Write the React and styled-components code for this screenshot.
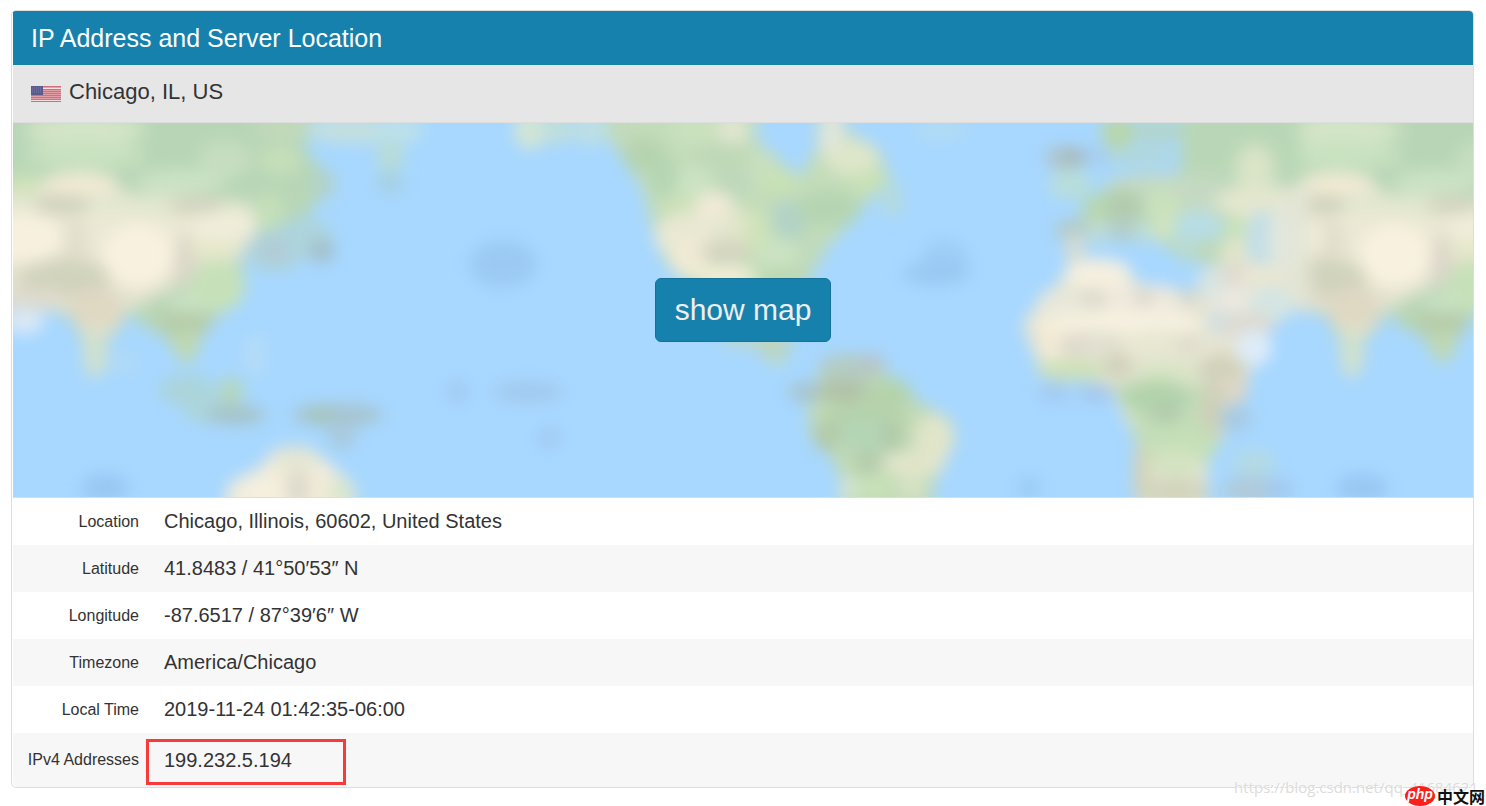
import React from "react";
import styled, { createGlobalStyle } from "styled-components";

const rows = [
  { label: "Location", value: "Chicago, Illinois, 60602, United States" },
  { label: "Latitude", value: "41.8483 / 41°50′53″ N" },
  { label: "Longitude", value: "-87.6517 / 87°39′6″ W" },
  { label: "Timezone", value: "America/Chicago" },
  { label: "Local Time", value: "2019-11-24 01:42:35-06:00" },
  { label: "IPv4 Addresses", value: "199.232.5.194", marked: true },
];

// [cx, cy, rx, ry, fill]
const asiaShades = [
  [25, 140, 22, 24, "#b8d6b8"],
  [85, 130, 60, 16, "#d3e5c6"],
  [85, 155, 60, 14, "#c9e2c0"],
  [180, 182, 45, 12, "#cbe3c4"],
  [225, 160, 26, 18, "#c6debf"],
  [25, 184, 18, 10, "#cfe3b9"],
  [285, 128, 30, 12, "#c2d9ba"],
  [280, 160, 20, 14, "#c6dfba"],
  [80, 183, 38, 11, "#f1ead4"],
  [130, 208, 125, 14, "#e3e7cf"],
  [62, 205, 28, 10, "#d1d3be"],
  [196, 205, 28, 10, "#d5d5c1"],
  [110, 235, 110, 22, "#ebe9d5"],
  [222, 226, 34, 14, "#f0eedb"],
  [270, 215, 14, 24, "#c4dfb8"],
  [24, 238, 40, 26, "#f7f0df"],
  [75, 244, 12, 26, "#e1dfcc"],
  [138, 256, 36, 32, "#f8f1df"],
  [186, 262, 11, 28, "#dbd6c9"],
  [212, 248, 24, 10, "#e6e8ca"],
  [64, 279, 46, 20, "#d1d3bd"],
  [35, 298, 34, 10, "#dfdacc"],
  [22, 304, 14, 8, "#d9dbd5"],
  [96, 308, 28, 20, "#dfd8c3"],
  [217, 286, 28, 26, "#c6e1b9"],
  [184, 304, 22, 10, "#c9e2c3"],
  [160, 308, 12, 14, "#b9d6b6"],
  [185, 323, 28, 12, "#b6ccaa"],
  [186, 346, 12, 16, "#c0d8b0"],
  [95, 354, 12, 24, "#d1e1cd"],
];

const shades = [
  // north pacific
  [352, 130, 44, 14, "#c3dfdf"],
  [400, 130, 24, 14, "#bce0ea"],
  [390, 156, 14, 16, "#b8dcd6"],
  [390, 183, 14, 10, "#a5cfdf"],
  [324, 184, 12, 16, "#b1d2cb"],
  [275, 250, 28, 22, "#aed2d8"],
  [304, 238, 28, 22, "#add4dd"],
  [275, 250, 14, 8, "#b4c8d6"],
  [322, 251, 13, 12, "#a3bfca"],
  [24, 322, 20, 12, "#dbe9f6"],
  [255, 355, 10, 22, "#b6dcf6"],
  [122, 362, 18, 12, "#b0d9f6"],
  // south east asia and australia
  [187, 390, 28, 16, "#abd4da"],
  [207, 410, 24, 14, "#acd5dc"],
  [231, 391, 13, 14, "#b4d6be"],
  [236, 415, 30, 10, "#a5c3c8"],
  [338, 415, 46, 11, "#a6c3cc"],
  [320, 415, 14, 9, "#a6c4b8"],
  [342, 434, 14, 16, "#a9c9de"],
  // ocean depth
  [105, 488, 24, 14, "#98c7f3"],
  [503, 264, 34, 24, "#9bc9f3"],
  [458, 392, 12, 11, "#a2c9f1"],
  [528, 392, 36, 11, "#a3c9ef"],
  [549, 438, 12, 11, "#a2c9f1"],
  [945, 260, 24, 20, "#9dcdf6"],
  [936, 274, 34, 11, "#99c8f2"],
  [1029, 488, 12, 12, "#9accf4"],
  [1362, 488, 26, 14, "#98c7f3"],
  // north america
  [530, 130, 16, 20, "#d2e5d4"],
  [556, 130, 16, 14, "#c0dfda"],
  [590, 130, 18, 16, "#bddfe3"],
  [622, 132, 14, 16, "#c3dabb"],
  [644, 155, 22, 18, "#b6d3af"],
  [664, 178, 14, 22, "#b4d5b3"],
  [696, 130, 26, 12, "#cbe2bf"],
  [733, 130, 16, 14, "#e1e6d0"],
  [720, 158, 30, 10, "#bed7b6"],
  [736, 182, 20, 10, "#bdd6bb"],
  [694, 182, 18, 16, "#cbe3c3"],
  [680, 203, 18, 12, "#cbe0b9"],
  [714, 207, 20, 16, "#f0ead6"],
  [688, 236, 34, 24, "#e9e8d2"],
  [740, 228, 20, 18, "#e2e6cb"],
  [690, 258, 20, 20, "#f0ead5"],
  [727, 251, 27, 11, "#d4d4c0"],
  [727, 277, 30, 12, "#f1eed6"],
  [762, 170, 14, 20, "#c9dfbf"],
  [780, 182, 18, 10, "#c9e2b4"],
  [832, 138, 12, 28, "#e2e6de"],
  [852, 158, 26, 18, "#dee6ca"],
  [870, 182, 22, 10, "#c7e1b6"],
  [828, 209, 34, 18, "#b5d5b2"],
  [786, 214, 14, 14, "#b3d3c9"],
  [790, 228, 16, 12, "#b2d2c6"],
  [756, 232, 12, 22, "#cfe3b9"],
  [780, 254, 24, 16, "#cbe3c2"],
  [810, 252, 14, 16, "#bfdabb"],
  [784, 276, 28, 10, "#bcd7b3"],
  [892, 198, 11, 20, "#b4dade"],
  [940, 130, 28, 10, "#b2dbf3"],
  // central and south america
  [775, 346, 18, 10, "#bad3c0"],
  [740, 340, 20, 8, "#b8d7d3"],
  [850, 368, 32, 14, "#b4cbc2"],
  [872, 364, 14, 10, "#b8c4c8"],
  [806, 392, 18, 11, "#a8c5d1"],
  [842, 391, 26, 11, "#b0c2a6"],
  [890, 394, 22, 16, "#b4d3ab"],
  [864, 418, 40, 16, "#b5d1ac"],
  [866, 436, 30, 18, "#b4d5b5"],
  [826, 437, 12, 14, "#b2c8a8"],
  [892, 437, 11, 14, "#b0c9a8"],
  [868, 463, 12, 12, "#b3caab"],
  [934, 438, 20, 24, "#e1e5c9"],
  [914, 464, 32, 14, "#e1e5ca"],
  [872, 488, 22, 14, "#c8e1b9"],
  [848, 490, 9, 16, "#d2e3d0"],
  [912, 488, 14, 14, "#d5e2c4"],
  // europe
  [1118, 132, 17, 18, "#b8d6ab"],
  [1158, 130, 26, 14, "#b2d5ce"],
  [1140, 157, 36, 11, "#b0d7df"],
  [1066, 157, 22, 11, "#aec2cb"],
  [1074, 157, 12, 9, "#a8b9ba"],
  [1098, 156, 10, 10, "#a6cbef"],
  [1070, 184, 22, 16, "#b8dddb"],
  [1170, 186, 66, 12, "#c5d9c2"],
  [1122, 206, 22, 16, "#b2cbae"],
  [1096, 208, 13, 14, "#b8d7ae"],
  [1122, 230, 14, 12, "#b3cdc9"],
  [1072, 230, 18, 11, "#b2c9ca"],
  [1075, 250, 10, 18, "#d6dcd2"],
  [1098, 232, 10, 12, "#c0dcd6"],
  [1144, 232, 10, 12, "#bcdcda"],
  [1163, 206, 20, 16, "#cae1bd"],
  [1165, 228, 12, 14, "#d2e4bb"],
  [1205, 208, 22, 12, "#c6dac5"],
  [1198, 229, 26, 18, "#b7dde6"],
  [1255, 170, 20, 26, "#dae4c7"],
  [1248, 202, 34, 14, "#e4e7ce"],
  [1196, 250, 20, 12, "#b9dbd2"],
  [1212, 252, 18, 12, "#bed7b8"],
  [1236, 228, 12, 12, "#c7e2b8"],
  [1234, 252, 14, 14, "#e1e5c9"],
  [1262, 240, 16, 30, "#c2dee8"],
  [1282, 240, 14, 30, "#e2e7dd"],
  // middle east
  [1214, 284, 18, 18, "#d7e4e2"],
  [1236, 274, 16, 12, "#dfdad0"],
  [1262, 274, 22, 10, "#ebe7d1"],
  [1236, 300, 24, 14, "#ebe8df"],
  [1272, 304, 22, 18, "#d4e5e3"],
  [1220, 322, 14, 12, "#d0e0e4"],
  [1248, 324, 28, 12, "#dcdad2"],
  [1254, 348, 18, 18, "#deecf9"],
  // africa
  [1098, 274, 34, 16, "#f5efdf"],
  [1062, 306, 26, 18, "#e7e7d9"],
  [1140, 304, 54, 20, "#eee9dc"],
  [1120, 324, 84, 16, "#f5f0df"],
  [1054, 340, 12, 20, "#f4ecd6"],
  [1090, 344, 34, 12, "#e1dfd0"],
  [1074, 344, 10, 9, "#dcd6cb"],
  [1118, 344, 10, 9, "#dcd8ca"],
  [1094, 299, 13, 9, "#d9d8ca"],
  [1144, 298, 11, 8, "#dbd6cb"],
  [1188, 298, 11, 8, "#d6d7ca"],
  [1164, 346, 48, 14, "#e7e7d2"],
  [1188, 344, 13, 8, "#dcd9ca"],
  [1072, 370, 36, 11, "#cde0b8"],
  [1118, 366, 14, 12, "#d0d0b9"],
  [1166, 372, 36, 10, "#d7e4c4"],
  [1222, 370, 24, 16, "#d1d1ba"],
  [1230, 390, 18, 14, "#dcd6c6"],
  [1155, 396, 36, 16, "#b2d3ac"],
  [1166, 412, 16, 12, "#b1ccac"],
  [1212, 412, 12, 30, "#ced0b7"],
  [1180, 442, 38, 16, "#c4dfb8"],
  [1176, 462, 28, 14, "#d3e3c1"],
  [1142, 474, 9, 32, "#d2d3b9"],
  [1176, 492, 34, 14, "#d2d4bc"],
  [1054, 393, 16, 10, "#a3c9f0"],
  [1096, 393, 18, 10, "#a3c8ed"],
  [1236, 418, 16, 14, "#a7cae4"],
  [1252, 490, 30, 14, "#b0cad9"],
  [1280, 490, 14, 12, "#a3c9ee"],
  [1254, 462, 22, 12, "#b4dae1"],
];

const asiaLands = [
  {
    fill: "#b8d6b6",
    d: "M-10 60H312L306 150L326 176L316 204L296 226L284 244L268 232L246 236L242 262L246 288L236 306L214 318L204 334L194 354L186 366L176 352L162 334L144 328L132 312L120 328L106 344L96 378L86 366L82 340L68 316L40 308L-10 308Z",
  },
  {
    fill: "#e4e3d0",
    d: "M-10 196L50 176H108L140 202H250L262 228L236 262L182 272L170 292L126 312L110 336L86 340L70 312L-10 308Z",
  },
];

const lands = [
  {
    fill: "#c3dcb9",
    d: "M606 60H762L756 140L776 156L800 178L816 148L822 60H838L846 130L878 148L888 170L882 188L862 206L842 232L816 258L806 284L800 300L776 352L788 362L776 366L752 346L700 300L664 262L652 228L644 192L626 162L608 138Z",
  },
  {
    fill: "#c0d9b5",
    d: "M824 366L868 360L892 378L914 398L952 420L956 444L940 462L934 486L926 550H840L842 480L828 452L810 438L808 400Z",
  },
  {
    fill: "#b9d7b6",
    d: "M1182 60H1300V220L1230 250L1196 260L1182 262L1160 240L1128 240L1106 222L1084 238L1068 258L1066 224L1098 208L1108 180L1180 176Z",
  },
  {
    fill: "#e3e5d4",
    d: "M1240 186H1310V300L1286 312L1262 340L1232 346L1206 310L1198 286L1226 256Z",
  },
  {
    fill: "#e6e4d2",
    d: "M1064 276L1096 262L1124 264L1140 286L1200 292L1212 318L1238 342L1256 352L1246 388L1226 412L1222 440L1208 462L1204 550H1138L1136 440L1120 408L1112 388L1080 378L1048 376L1034 356L1022 324L1040 300Z",
  },
  { fill: "#c3dcb8", d: "M1112 384H1204L1222 440L1208 462L1140 470L1132 420Z" },
  {
    fill: "#f1ebd9",
    d: "M218 550L228 484L262 466L276 448L308 446L332 466L352 484L356 550Z",
  },
];

const stripes = [0, 3, 5, 7, 9, 11, 13, 15];

function Shades({ items }) {
  return items.map(([cx, cy, rx, ry, fill], i) => (
    <ellipse key={i} cx={cx} cy={cy} rx={rx} ry={ry} fill={fill} />
  ));
}

function Lands({ items }) {
  return items.map((land) => <path key={land.d} d={land.d} fill={land.fill} />);
}

function Asia({ shift = 0 }) {
  return (
    <g transform={`translate(${shift} 0)`}>
      <Lands items={asiaLands} />
      <Shades items={asiaShades} />
    </g>
  );
}

function WorldMap() {
  return (
    <MapSvg
      viewBox="13 123 1460 374"
      preserveAspectRatio="xMidYMid slice"
      aria-hidden="true"
    >
      <defs>
        <filter
          id="haze"
          filterUnits="userSpaceOnUse"
          x="-60"
          y="60"
          width="1620"
          height="500"
          colorInterpolationFilters="sRGB"
        >
          <feGaussianBlur stdDeviation="8" />
        </filter>
      </defs>
      <rect x="-60" y="60" width="1620" height="500" fill="#a8d8ff" />
      <g filter="url(#haze)">
        <Asia />
        <Asia shift={1257} />
        <Lands items={lands} />
        <Shades items={shades} />
        <ellipse cx="262" cy="492" rx="20" ry="14" fill="#f5f0df" />
        <ellipse cx="296" cy="458" rx="22" ry="12" fill="#e4e6d2" />
        <ellipse cx="298" cy="488" rx="11" ry="18" fill="#dcd9cb" />
        <ellipse cx="342" cy="492" rx="14" ry="14" fill="#dbe6cd" />
      </g>
    </MapSvg>
  );
}

function Flag() {
  return (
    <FlagSvg viewBox="0 0 30 16" role="img" aria-label="US">
      <rect width="30" height="16" fill="#e2a0a8" />
      {stripes.map((y) => (
        <rect key={y} y={y} width="30" height="1" fill="#cd6f7d" />
      ))}
      <rect y="2" width="30" height="1" fill="#f3dfe2" />
      <rect y="14" width="30" height="1" fill="#f3dfe2" />
      <rect width="12" height="9" fill="#5a5a8e" />
      <path d="M1 2h10M1 4h10M1 6h10" stroke="#7b7ba6" strokeDasharray="1 1" />
    </FlagSvg>
  );
}

function App() {
  return (
    <>
      <GlobalStyle />
      <Page>
        <Panel>
          <Title>IP Address and Server Location</Title>
          <Place>
            <Flag />
            Chicago, IL, US
          </Place>
          <MapArea>
            <WorldMap />
            <MapButton type="button">show map</MapButton>
          </MapArea>
          <Table>
            <tbody>
              {rows.map((row) => (
                <Row key={row.label} $tall={row.marked}>
                  <Label scope="row">{row.label}</Label>
                  <Value>
                    {row.value}
                    {row.marked && <Marker />}
                  </Value>
                </Row>
              ))}
            </tbody>
          </Table>
        </Panel>
        <Watermark>https://blog.csdn.net/qq_41684621</Watermark>
        <Badge>
          <Php>php</Php>
          中文网
        </Badge>
      </Page>
    </>
  );
}

export default App;

const GlobalStyle = createGlobalStyle`
  * {
    box-sizing: border-box;
  }

  body {
    margin: 0;
    background: #fff;
    color: #333;
    font-family: "Liberation Sans", Arial, sans-serif;
  }
`;

const Page = styled.main`
  position: relative;
  padding: 10px 12px 18px 11px;
`;

const Panel = styled.section`
  padding-left: 1px;
  border: 1px solid #ddd;
  border-radius: 5px;
  overflow: hidden;
`;

const Title = styled.h1`
  margin: 0;
  padding: 0 18px;
  background: #1681ad;
  color: #fff;
  font-size: 25px;
  font-weight: 400;
  line-height: 54px;
`;

const Place = styled.h2`
  display: flex;
  align-items: center;
  gap: 8px;
  margin: 0;
  padding: 0 18px 4px;
  background: #e6e6e6;
  border-bottom: 1px solid #ddd;
  font-size: 22px;
  font-weight: 400;
  line-height: 53px;
`;

const FlagSvg = styled.svg`
  width: 30px;
  height: 16px;
  margin-top: 5px;
`;

const MapArea = styled.div`
  display: grid;
  place-items: center;
  height: 375px;
  border-bottom: 1px solid #ddd;
`;

const MapSvg = styled.svg`
  grid-area: 1 / 1;
  width: 100%;
  height: 374px;
`;

const MapButton = styled.button`
  grid-area: 1 / 1;
  z-index: 1;
  padding: 10px 19px;
  background: #1681ad;
  border: 1px solid #13719a;
  border-radius: 6px;
  color: #eee;
  font-family: inherit;
  font-size: 30px;
  line-height: 42px;
`;

const Table = styled.table`
  width: 100%;
  border-collapse: collapse;
`;

const Row = styled.tr`
  height: ${(props) => (props.$tall ? 54 : 47)}px;

  &:nth-child(even) {
    background: #f7f7f7;
  }
`;

const Label = styled.th`
  width: 139px;
  padding: 0 13px 0 0;
  font-size: 16px;
  font-weight: 400;
  text-align: right;
  white-space: nowrap;
`;

const Value = styled.td`
  position: relative;
  padding: 0 12px;
  font-size: 20px;
`;

const Marker = styled.span`
  position: absolute;
  top: 6px;
  left: -6px;
  width: 200px;
  height: 46px;
  border: 3px solid #f93a3a;
`;

const Watermark = styled.span`
  position: absolute;
  right: 8px;
  bottom: 9px;
  color: #dcdcdc;
  font-family: "Open Sans", sans-serif;
  font-size: 15px;
  line-height: 20px;
  text-shadow: 1px 1px 0 #fff;
`;

const Badge = styled.div`
  position: absolute;
  right: 1px;
  bottom: 0;
  display: flex;
  align-items: center;
  gap: 2px;
  font-family: "Noto Sans CJK SC", sans-serif;
  font-size: 16px;
  font-weight: 700;
  line-height: 20px;
  color: #111;
`;

const Php = styled.span`
  width: 30px;
  height: 20px;
  background: #f8201c;
  border-radius: 50%;
  color: #fff;
  font-family: "Liberation Sans", Arial, sans-serif;
  font-size: 14px;
  font-style: italic;
  line-height: 17px;
  text-align: center;
`;
